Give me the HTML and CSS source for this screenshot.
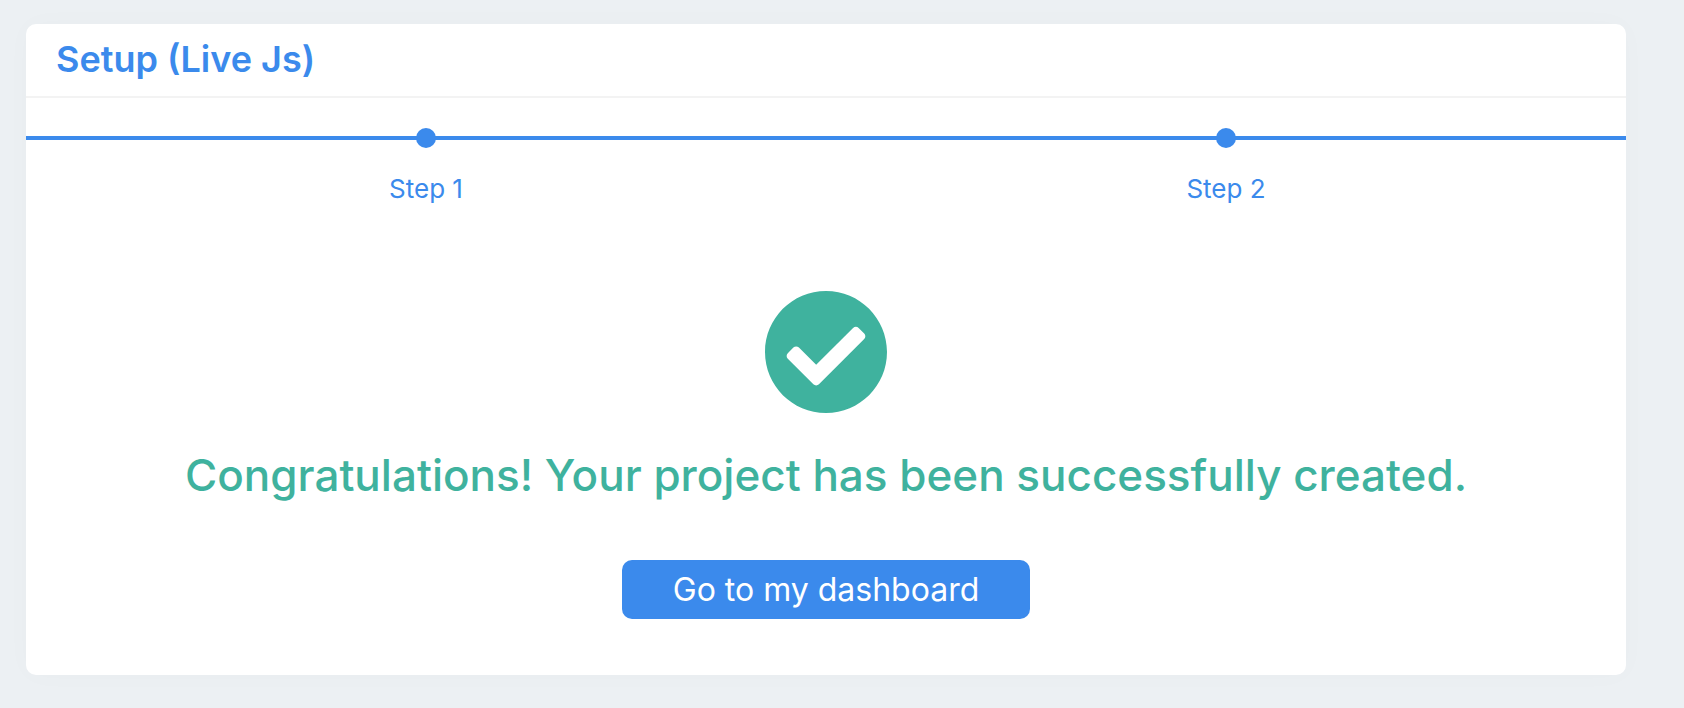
FILE: index.html
```
<!DOCTYPE html>
<html lang="en">
<head>
<meta charset="utf-8">
<title>Setup (Live Js)</title>
<link rel="stylesheet" href="styles.css">
</head>
<body>
<main class="card">
  <header class="card-header">
    <h1 class="card-title">Setup (Live Js)</h1>
  </header>
  <ol class="steps">
    <li class="step"><span class="step-track"><span class="step-dot"></span></span>Step 1</li>
    <li class="step"><span class="step-track"><span class="step-dot"></span></span>Step 2</li>
  </ol>
  <section class="result">
    <svg class="result-icon" viewBox="8 8 496 496" aria-hidden="true">
      <path fill="currentColor" d="M504 256c0 136.967-111.033 248-248 248S8 392.967 8 256 119.033 8 256 8s248 111.033 248 248zM227.314 387.314l184-184c6.248-6.248 6.248-16.379 0-22.627l-22.627-22.627c-6.248-6.249-16.379-6.249-22.628 0L216 308.118l-70.059-70.059c-6.248-6.248-16.379-6.248-22.628 0l-22.627 22.627c-6.248 6.248-6.248 16.379 0 22.627l104 104c6.249 6.249 16.379 6.249 22.628.001z"/>
    </svg>
    <h2 class="result-text">Congratulations! Your project has been successfully created.</h2>
    <button class="button" type="button">Go to my dashboard</button>
  </section>
</main>
</body>
</html>
```

FILE: styles.css
```
* {
  box-sizing: border-box;
}

body {
  margin: 0;
  padding: 24px 58px 32px 26px;
  background: #ecf0f3;
  font-family: Inter, "Liberation Sans", sans-serif;
}

.card {
  overflow: hidden;
  border-radius: 10px;
  background: #fff;
  box-shadow: 0 0 28px rgba(82, 63, 105, 0.02);
}

.card-header {
  padding: 13px 30px 15px;
  border-bottom: 2px solid #f3f3f3;
}

.card-title {
  margin: 0;
  color: #3b8aec;
  font-size: 36px;
  font-weight: 600;
  line-height: 44px;
}

.steps {
  display: flex;
  margin: 0;
  padding: 30px 0 0;
  list-style: none;
}

.step {
  flex: 1;
  color: #3b8aec;
  font-size: 26px;
  line-height: 32px;
  text-align: center;
}

.step-track {
  display: flex;
  justify-content: center;
  margin-bottom: 25px;
  background: linear-gradient(#3b8aec, #3b8aec) center / 100% 4px no-repeat;
}

.step-dot {
  width: 20px;
  height: 20px;
  border-radius: 50%;
  background: #3b8aec;
}

.result {
  display: flex;
  flex-direction: column;
  align-items: center;
  padding: 86px 30px 56px;
  text-align: center;
}

.result-icon {
  width: 122px;
  height: 122px;
  color: #3fb29e;
}

.result-text {
  margin: 34px 0 57px;
  color: #3fb29e;
  font-size: 44px;
  font-weight: 500;
  line-height: 56px;
}

.button {
  padding: 10px 51px;
  border: 0;
  border-radius: 10px;
  background: #3b8aec;
  color: #fff;
  font-family: inherit;
  font-size: 32px;
  line-height: 39px;
  cursor: pointer;
}
```
